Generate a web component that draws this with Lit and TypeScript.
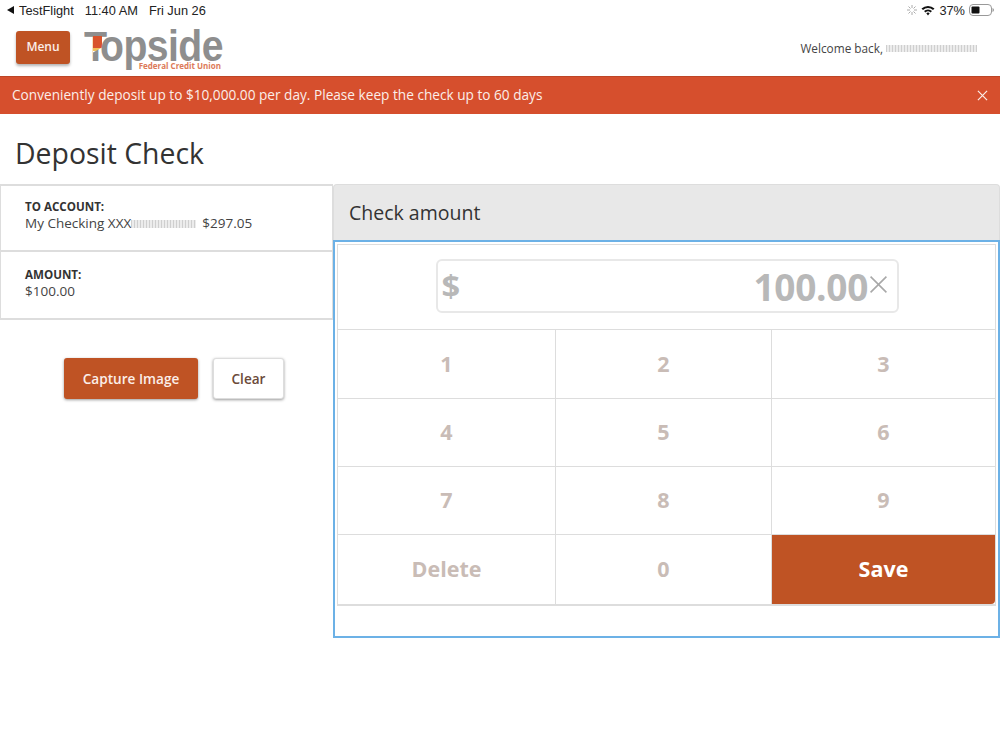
import { LitElement, html, css, svg } from "lit";
import { customElement } from "lit/decorators.js";

@customElement("app-root")
export class AppRoot extends LitElement {
  static styles = css`
    :host { display: block; width: 1000px; height: 750px; overflow: hidden; background: #fff; font-family: "Open Sans", sans-serif; color: #333; }
    * { box-sizing: border-box; }
    .status { height: 20px; display: flex; align-items: center; justify-content: space-between; padding: 0 6px 0 7px; font-family: "Liberation Sans", sans-serif; font-size: 12.8px; color: #222; }
    .status-left, .status-right { display: flex; align-items: center; }
    .status-left span { margin-right: 11px; }
    .back { width: 0; height: 0; border: 4px solid transparent; border-right: 7px solid #111; border-left: 0; margin-right: 5px; }
    .status-right { gap: 4px; }
    .spinner { margin-right: 0; }
    .header { height: 56px; display: flex; align-items: center; justify-content: space-between; padding: 0 23px 0 16px; }
    .header-left { display: flex; align-items: center; gap: 15px; }
    .menu { width: 54px; height: 33px; margin-top: -1px; border-radius: 3px; background: #bf5324; color: #fbeee9; font-size: 12px; font-weight: 600; display: flex; align-items: center; justify-content: center; box-shadow: 0 2px 3px rgba(0,0,0,.3); padding-bottom: 2px; }
    .logo { position: relative; width: 142px; height: 48px; margin-top: -1px; color: #8e8e8e; font-family: "Liberation Sans", sans-serif; font-weight: 700; line-height: 1; }
    .logo-t { position: absolute; left: -1px; top: 1px; font-size: 43px; transform: scaleX(.88); transform-origin: left top; }
    .logo-word { position: absolute; left: 15px; top: 0; font-size: 44px; letter-spacing: -.6px; white-space: nowrap; transform: scaleX(.89); transform-origin: left top; }
    .logo-accent { position: absolute; left: 8px; top: 12px; width: 9px; height: 17px; background: linear-gradient(#d9532c 0 72%, #f2c05a 72% 86%, #fff 86%); clip-path: polygon(0 0, 100% 0, 100% 70%, 0 100%); }
    .logo-sub { position: absolute; right: 6px; bottom: 2px; font-family: "Open Sans", sans-serif; font-size: 8px; color: #dc7a58; white-space: nowrap; }
    .welcome { font-size: 11.8px; color: #444; display: flex; align-items: center; gap: 3px; }
    .redact { display: inline-block; background: repeating-linear-gradient(90deg, #cfcfcf 0 1px, #ececec 1px 3px); }
    .redact.user { width: 91px; height: 7px; }
    .banner { height: 38px; background: #d64f2d; border-top: 1px solid #bd4526; color: #fbeee9; display: flex; align-items: center; justify-content: space-between; padding: 0 12px 2px; font-size: 13.65px; }
    .close { display: flex; padding-top: 2px; }
    h1 { margin: 0; height: 70px; padding: 20px 0 0 15px; font-size: 28.4px; font-weight: 400; line-height: 38px; color: #333; }
    .main { display: flex; align-items: flex-start; }
    .side { width: 333px; flex: none; }
    .info { height: 68px; padding: 14px 24px 0; border: 1px solid #ddd; border-top: 0; border-bottom-width: 2px; font-size: 13.5px; line-height: 17px; color: #444; }
    .info:first-child { border-top: 2px solid #ddd; padding-top: 12px; }
    .info b { display: block; font-size: 11.6px; font-weight: 700; color: #333; }
    .acct { display: flex; align-items: center; }
    .redact.acct-no { width: 65px; height: 8px; margin-right: 6px; }
    .actions { display: flex; gap: 15px; padding: 38px 0 0 64px; }
    .btn { height: 41px; border-radius: 3px; display: flex; align-items: center; justify-content: center; font-size: 13.6px; font-weight: 600; box-shadow: 0 1px 3px rgba(0,0,0,.4); }
    .primary { width: 134px; background: #bf5324; color: #fbeee9; }
    .secondary { width: 71px; background: #fff; color: #6b4a3a; border: 1px solid #ddd; }
    .panel { flex: 1; }
    .panel-head { height: 56px; background: #e8e8e8; border: 1px solid #ddd; border-bottom: 0; border-radius: 4px 4px 0 0; padding: 0 15px 1px; display: flex; align-items: center; font-size: 19.5px; color: #333; }
    .panel-body { height: 398px; border: 2px solid #6cb1e6; padding: 2px 2px 0 2px; }
    .pad { border: 1px solid #ddd; border-bottom: 2px solid #ddd; }
    .entry { height: 85px; display: flex; justify-content: center; padding: 14px 0 0 2px; border-bottom: 1px solid #ddd; }
    .field { position: relative; width: 463px; height: 54px; border: 2px solid #e8e8e8; border-radius: 6px; color: #b8b8b8; font-weight: 700; display: flex; align-items: center; justify-content: space-between; padding: 0 9px 0 4px; }
    .dollar { font-size: 31px; margin-bottom: 3px; transform: scaleX(1.05); }
    .value { display: flex; align-items: center; gap: 1px; font-size: 37px; letter-spacing: -.3px; }
    .value svg { display: block; margin-top: -4px; }
    .keys { display: grid; grid-template-columns: 218px 216px 1fr; grid-template-rows: 69px 68px 68px 69px; }
    .key { display: flex; align-items: center; justify-content: center; padding-bottom: 2px; font-size: 21.5px; font-weight: 700; color: #c9bcb6; border-right: 1px solid #ddd; border-bottom: 1px solid #ddd; }
    .key:nth-child(3n) { border-right: 0; }
    .key:nth-last-child(-n+3) { border-bottom: 0; }
    .key.save { background: #bf5324; color: #fff; border-bottom-right-radius: 4px; }
  `;

  private cross(size: number, color: string, w: number) {
    return html`<svg width=${size} height=${size} viewBox="0 0 12 12">${svg`<path d="M1 1 11 11M11 1 1 11" stroke=${color} stroke-width=${w} fill="none"/>`}</svg>`;
  }

  render() {
    const keys = ["1","2","3","4","5","6","7","8","9","Delete","0","Save"];
    return html`
      <div class="status">
        <div class="status-left"><i class="back"></i><span>TestFlight</span><span>11:40 AM</span><span>Fri Jun 26</span></div>
        <div class="status-right">
          <svg class="spinner" width="10" height="10" viewBox="0 0 10 10"><path d="M5 0V3M5 7V10M0 5H3M7 5H10M1.500 1.500 3.500 3.500M6.500 6.500 8.500 8.500M8.500 1.500 6.500 3.500M3.500 6.500 1.500 8.500" stroke="#aaa" stroke-width="1"/></svg>
          <svg width="14" height="11" viewBox="0 0 14 11"><path d="M.5 3.600a9.300 9.300 0 0 1 13 0L12 5.100a7.200 7.200 0 0 0-10 0zM3 6a5.800 5.800 0 0 1 8 0L9.500 7.500a3.700 3.700 0 0 0-5 0zM5.300 8.300a2.400 2.400 0 0 1 3.400 0L7 10.500z" fill="#111"/></svg>
          <span>37%</span>
          <svg width="25" height="12" viewBox="0 0 25 12"><rect x=".5" y=".5" width="22" height="11" rx="3.500" fill="none" stroke="#999"/><rect x="2.500" y="2.500" width="8" height="7" rx="1" fill="#111"/><path d="M23.500 4v4c.7-.3 1.500-1.200 1.500-2s-.8-1.700-1.500-2z" fill="#999"/></svg>
        </div>
      </div>
      <div class="header">
        <div class="header-left">
          <div class="menu">Menu</div>
          <div class="logo">
            <span class="logo-t">T</span>
            <i class="logo-accent"></i>
            <span class="logo-word">opside</span>
            <span class="logo-sub">Federal Credit Union</span>
          </div>
        </div>
        <div class="welcome">Welcome back, <i class="redact user"></i></div>
      </div>
      <div class="banner">
        <span>Conveniently deposit up to $10,000.00 per day. Please keep the check up to 60 days</span>
        <span class="close">${this.cross(11, "#fbeee9", 1.300)}</span>
      </div>
      <h1>Deposit Check</h1>
      <div class="main">
        <div class="side">
          <div class="info"><b>TO ACCOUNT:</b><div class="acct">My Checking XXX<i class="redact acct-no"></i>$297.05</div></div>
          <div class="info"><b>AMOUNT:</b><div>$100.00</div></div>
          <div class="actions">
            <div class="btn primary">Capture Image</div>
            <div class="btn secondary">Clear</div>
          </div>
        </div>
        <div class="panel">
          <div class="panel-head">Check amount</div>
          <div class="panel-body">
            <div class="pad">
              <div class="entry">
                <div class="field">
                  <span class="dollar">$</span>
                  <span class="value">100.00${this.cross(19, "#a8a8a8", 1)}</span>
                </div>
              </div>
              <div class="keys">
                ${keys.map((k) => html`<div class="key ${k === "Save" ? "save" : ""}">${k}</div>`)}
              </div>
            </div>
          </div>
        </div>
      </div>
    `;
  }
}
